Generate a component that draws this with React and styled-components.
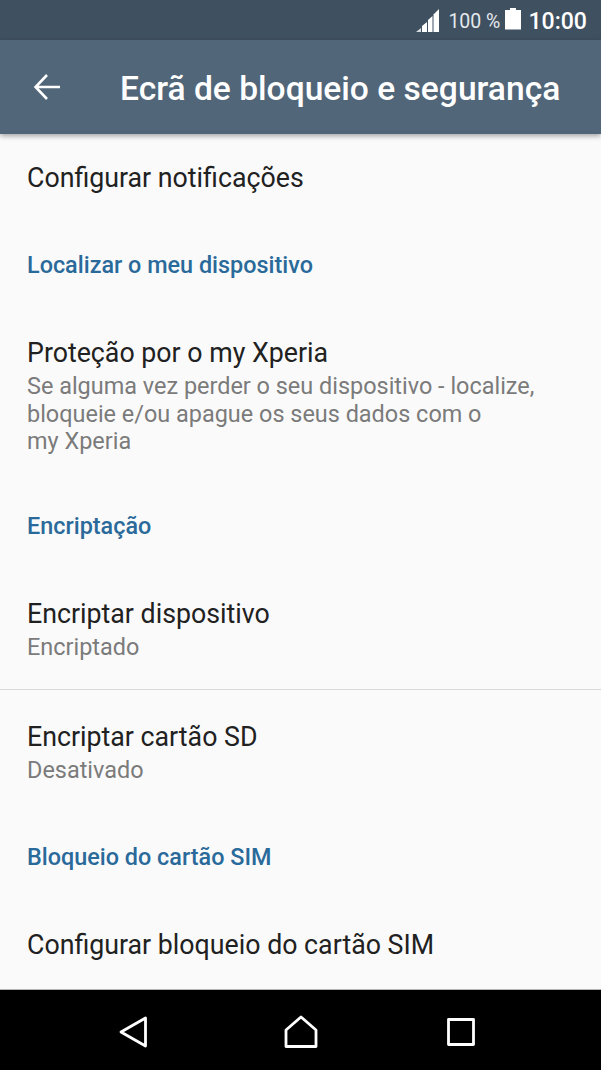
import styled, { createGlobalStyle } from "styled-components";

const GlobalStyle = createGlobalStyle`
  html, body {
    margin: 0;
    padding: 0;
    background: #fafafa;
  }
  * {
    box-sizing: border-box;
  }
`;

const Screen = styled.div`
  width: 601px;
  height: 1070px;
  display: flex;
  flex-direction: column;
  overflow: hidden;
  font-family: Roboto, "Liberation Sans", sans-serif;
  background: #fafafa;
`;

const StatusBar = styled.div`
  height: 40px;
  flex: none;
  display: flex;
  align-items: center;
  justify-content: flex-end;
  padding-right: 14px;
  background: #3f5061;
  color: #fff;
`;

const Percent = styled.span`
  font-size: 19.5px;
  margin: 2px 5px 0 9px;
  color: #e4e8ec;
`;

const Clock = styled.span`
  font-size: 23.1px;
  font-weight: 500;
  margin: 2px 0 0 7px;
`;

const AppBar = styled.header`
  height: 94px;
  flex: none;
  display: flex;
  align-items: center;
  padding-left: 34px;
  background: #526679;
  box-shadow: 0 2px 5px rgba(0, 0, 0, 0.35);
  position: relative;
  z-index: 1;
`;

const Title = styled.h1`
  margin: 3px 0 0 60px;
  font-size: 33.6px;
  font-weight: 500;
  line-height: 40px;
  color: #fff;
  white-space: nowrap;
`;

const List = styled.main`
  flex: 1;
  min-height: 0;
  padding-top: 1px;
`;

const Item = styled.div`
  padding: 28px 27px;
  &:first-child {
    padding-top: 25px;
  }
`;

const ItemTitle = styled.div`
  font-size: 26.75px;
  line-height: 36px;
  color: #212121;
  white-space: nowrap;
`;

const ItemText = styled.div`
  margin-top: 2px;
  font-size: 23.45px;
  line-height: 27.5px;
  color: #7b7b7b;
  white-space: pre-line;
`;

const Category = styled.div`
  padding: ${(p) => p.$top}px 27px 27px;
  font-size: 23.4px;
  font-weight: 500;
  line-height: 30px;
  color: #2a6a9b;
`;

const Divider = styled.hr`
  margin: 0 0 1px;
  border: none;
  height: 1px;
  background: #d9d9d9;
`;

const NavBar = styled.nav`
  height: 81px;
  flex: none;
  display: grid;
  grid-template-columns: 166px 169px 152px;
  align-items: center;
  padding: 3px 0 0 50px;
  background: #000;
  border-top: 1px solid #b5b5b5;
`;

const NavButton = styled.div`
  display: flex;
  justify-content: center;
`;

const Signal = () => (
  <svg width="23" height="24" viewBox="0 0 23 24" fill="#fff">
    <path d="M0 24 L5 20 V24 Z" opacity="0.8" />
    <path d="M6 24 V18 L11 14 V24 Z" />
    <path d="M12 24 V12 L16.5 8 V24 Z" />
    <path d="M17.5 24 V6.5 L23 1 V24 Z" />
  </svg>
);

const Battery = () => (
  <svg width="16" height="24" viewBox="0 0 16 24" fill="#fff">
    <path d="M5 0 H11 V2 H16 V21.5 H0 V2 H5 Z" />
  </svg>
);

const BackArrow = () => (
  <svg width="26" height="26" viewBox="0 0 26 26" fill="none" stroke="#fff" strokeWidth="2.6">
    <path d="M1.5 13 H26 M13 1 L1.5 13 L13 25" />
  </svg>
);

const NavBack = () => (
  <svg width="28" height="32" viewBox="0 0 28 32" fill="none" stroke="#fff" strokeWidth="2.8" strokeLinejoin="round">
    <path d="M2 16 L26.5 2 V30 Z" />
  </svg>
);

const NavHome = () => (
  <svg width="34" height="33" viewBox="0 0 34 33" fill="none" stroke="#fff" strokeWidth="2.8" strokeLinejoin="round">
    <path d="M2 15 L17 2 L32 15 V31.5 H2 Z" />
  </svg>
);

const NavRecent = () => (
  <svg width="28" height="28" viewBox="0 0 28 28" fill="none" stroke="#fff" strokeWidth="2.8" strokeLinejoin="round">
    <rect x="1.5" y="1.5" width="25" height="25" />
  </svg>
);

export default function App() {
  return (
    <Screen>
      <GlobalStyle />
      <StatusBar>
        <Signal />
        <Percent>100 %</Percent>
        <Battery />
        <Clock>10:00</Clock>
      </StatusBar>
      <AppBar>
        <BackArrow />
        <Title>Ecrã de bloqueio e segurança</Title>
      </AppBar>
      <List>
        <Item>
          <ItemTitle>Configurar notificações</ItemTitle>
        </Item>
        <Category $top={26}>Localizar o meu dispositivo</Category>
        <Item>
          <ItemTitle>Proteção por o my Xperia</ItemTitle>
          <ItemText>
            {"Se alguma vez perder o seu dispositivo - localize,\nbloqueie e/ou apague os seus dados com o\nmy Xperia"}
          </ItemText>
        </Item>
        <Category $top={27}>Encriptação</Category>
        <Item>
          <ItemTitle>Encriptar dispositivo</ItemTitle>
          <ItemText>Encriptado</ItemText>
        </Item>
        <Divider />
        <Item>
          <ItemTitle>Encriptar cartão SD</ItemTitle>
          <ItemText>Desativado</ItemText>
        </Item>
        <Category $top={29}>Bloqueio do cartão SIM</Category>
        <Item>
          <ItemTitle>Configurar bloqueio do cartão SIM</ItemTitle>
        </Item>
      </List>
      <NavBar>
        <NavButton><NavBack /></NavButton>
        <NavButton><NavHome /></NavButton>
        <NavButton><NavRecent /></NavButton>
      </NavBar>
    </Screen>
  );
}
